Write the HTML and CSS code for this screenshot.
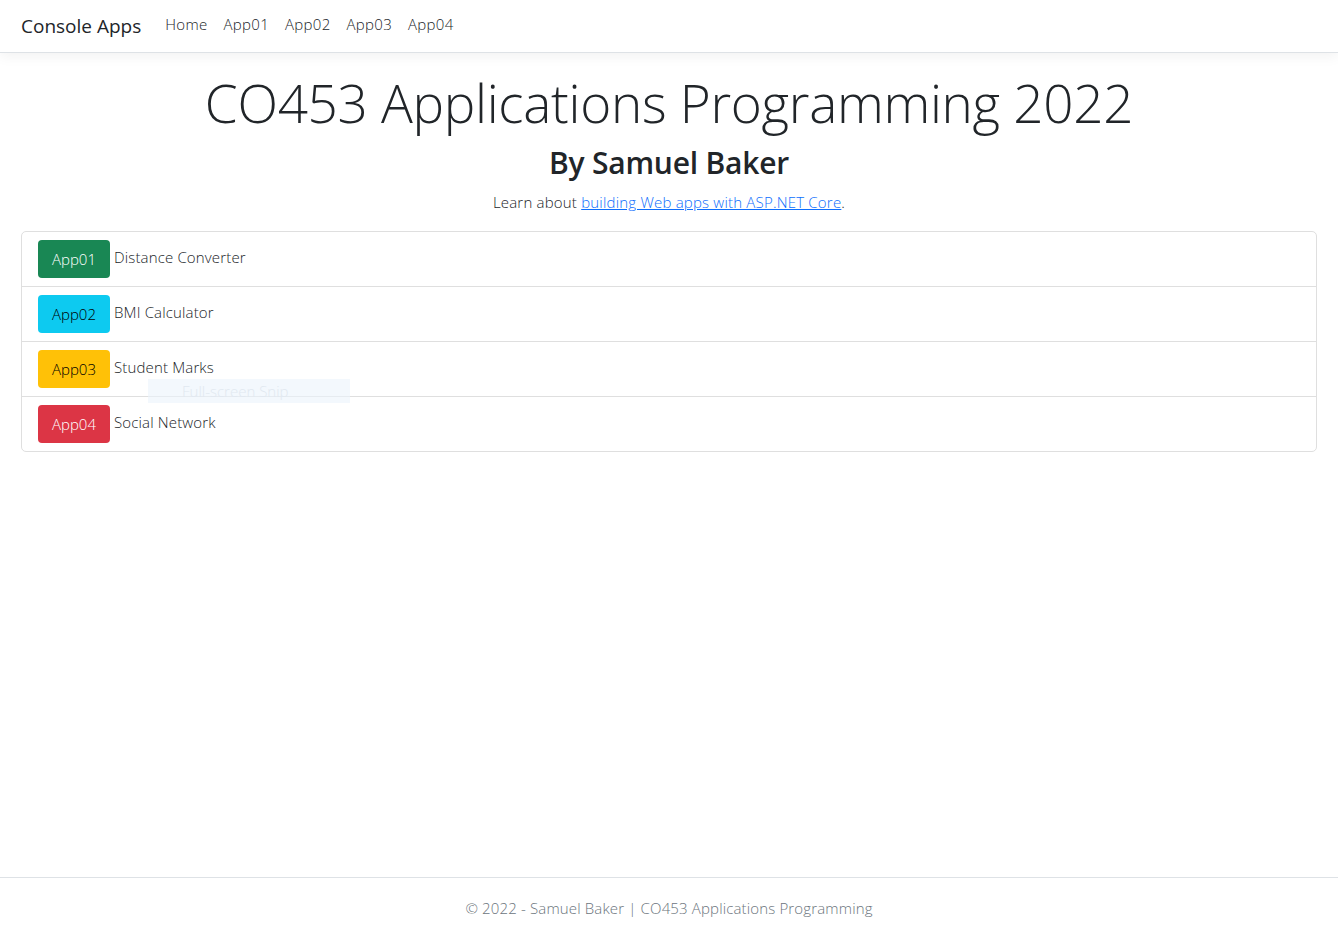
FILE: index.html
```html
<!DOCTYPE html>
<html lang="en">
<head>
<meta charset="utf-8">
<title>Console Apps</title>
<link rel="stylesheet" href="styles.css">
</head>
<body>
<header class="navbar">
  <a class="brand" href="#">Console Apps</a>
  <nav class="nav">
    <a class="nav-link" href="#">Home</a>
    <a class="nav-link" href="#">App01</a>
    <a class="nav-link" href="#">App02</a>
    <a class="nav-link" href="#">App03</a>
    <a class="nav-link" href="#">App04</a>
  </nav>
</header>
<main class="main">
  <div class="intro">
    <h1 class="display">CO453 Applications Programming 2022</h1>
    <h2 class="byline">By Samuel Baker</h2>
    <p class="lead">Learn about <a href="#">building Web apps with ASP.NET Core</a>.</p>
  </div>
  <ul class="list">
    <li class="item"><a class="btn btn-green" href="#">App01</a><span class="label">Distance Converter</span></li>
    <li class="item"><a class="btn btn-cyan" href="#">App02</a><span class="label">BMI Calculator</span></li>
    <li class="item"><a class="btn btn-yellow" href="#">App03</a><span class="label">Student Marks</span></li>
    <li class="item"><a class="btn btn-red" href="#">App04</a><span class="label">Social Network</span></li>
  </ul>
  <div class="snip">Full-screen Snip</div>
</main>
<footer class="footer">© 2022 - Samuel Baker | CO453 Applications Programming</footer>
</body>
</html>
```

FILE: styles.css
```css
* { box-sizing: border-box; }
html, body { height: 100%; }
body {
  margin: 0;
  font-family: "Open Sans", "Noto Sans", sans-serif;
  font-size: 16px;
  line-height: 1.5;
  color: #212529;
  background: #fff;
  display: flex;
  flex-direction: column;
  min-height: 100vh;
}
a { color: #0d6efd; }
.navbar {
  height: 53px;
  display: flex;
  align-items: center;
  padding: 0 21px;
  border-bottom: 1px solid #dee2e6;
  box-shadow: 0 4px 12px rgba(0,0,0,0.05);
  margin-bottom: 16px;
}
.brand {
  font-size: 19px;
  color: #212529;
  text-decoration: none;
  letter-spacing: 0;
  margin-right: 16px;
  margin-top: 1px;
}
.nav { display: flex; }
.nav-link {
  font-size: 15px;
  font-weight: 300;
  color: #212529;
  text-decoration: none;
  padding: 0 8px;
  letter-spacing: 0.3px;
  margin-top: -3px;
}
.main {
  flex: 1;
  padding: 0 21px;
  position: relative;
}
.intro { text-align: center; }
.display {
  font-size: 53px;
  font-weight: 300;
  line-height: 67px;
  margin: 0 0 8px;
  letter-spacing: -0.3px;
}
.byline {
  font-size: 30px;
  font-weight: 600;
  line-height: 38px;
  margin: 0 0 8px;
  letter-spacing: -0.2px;
}
.lead {
  font-size: 15px;
  font-weight: 300;
  margin: 0 0 17px;
  line-height: 24px;
  letter-spacing: 0.2px;
}
.list {
  list-style: none;
  margin: 0;
  padding: 0;
  border: 1px solid #dfdfdf;
  border-radius: 5px;
}
.item {
  display: flex;
  align-items: center;
  gap: 4px;
  padding: 8px 16px;
  font-size: 15px;
  font-weight: 300;
  letter-spacing: 0.15px;
  line-height: 24px;
}
.item + .item { border-top: 1px solid #dfdfdf; }
.label { margin-bottom: 4px; }
.btn {
  display: inline-block;
  width: 72px;
  height: 38px;
  line-height: 39px;
  text-align: center;
  border-radius: 4px;
  text-decoration: none;
  font-size: 15px;
  font-weight: 300;
  letter-spacing: 0;
}
.btn-green { background: #198754; color: #fff; }
.btn-cyan { background: #0dcaf0; color: #000; }
.btn-yellow { background: #ffc107; color: #000; }
.btn-red { background: #dc3545; color: #fff; }
.snip {
  position: absolute;
  left: 148px;
  top: 310px;
  width: 202px;
  height: 24px;
  background: rgba(235, 243, 252, 0.6);
  color: #e1e8f0;
  font-size: 15px;
  font-weight: 300;
  line-height: 24px;
  padding-left: 34px;
}
.footer {
  border-top: 1px solid #dee2e6;
  height: 55px;
  line-height: 60px;
  text-align: center;
  color: #6c757d;
  font-size: 15px;
  font-weight: 300;
  letter-spacing: 0.15px;
}
```
